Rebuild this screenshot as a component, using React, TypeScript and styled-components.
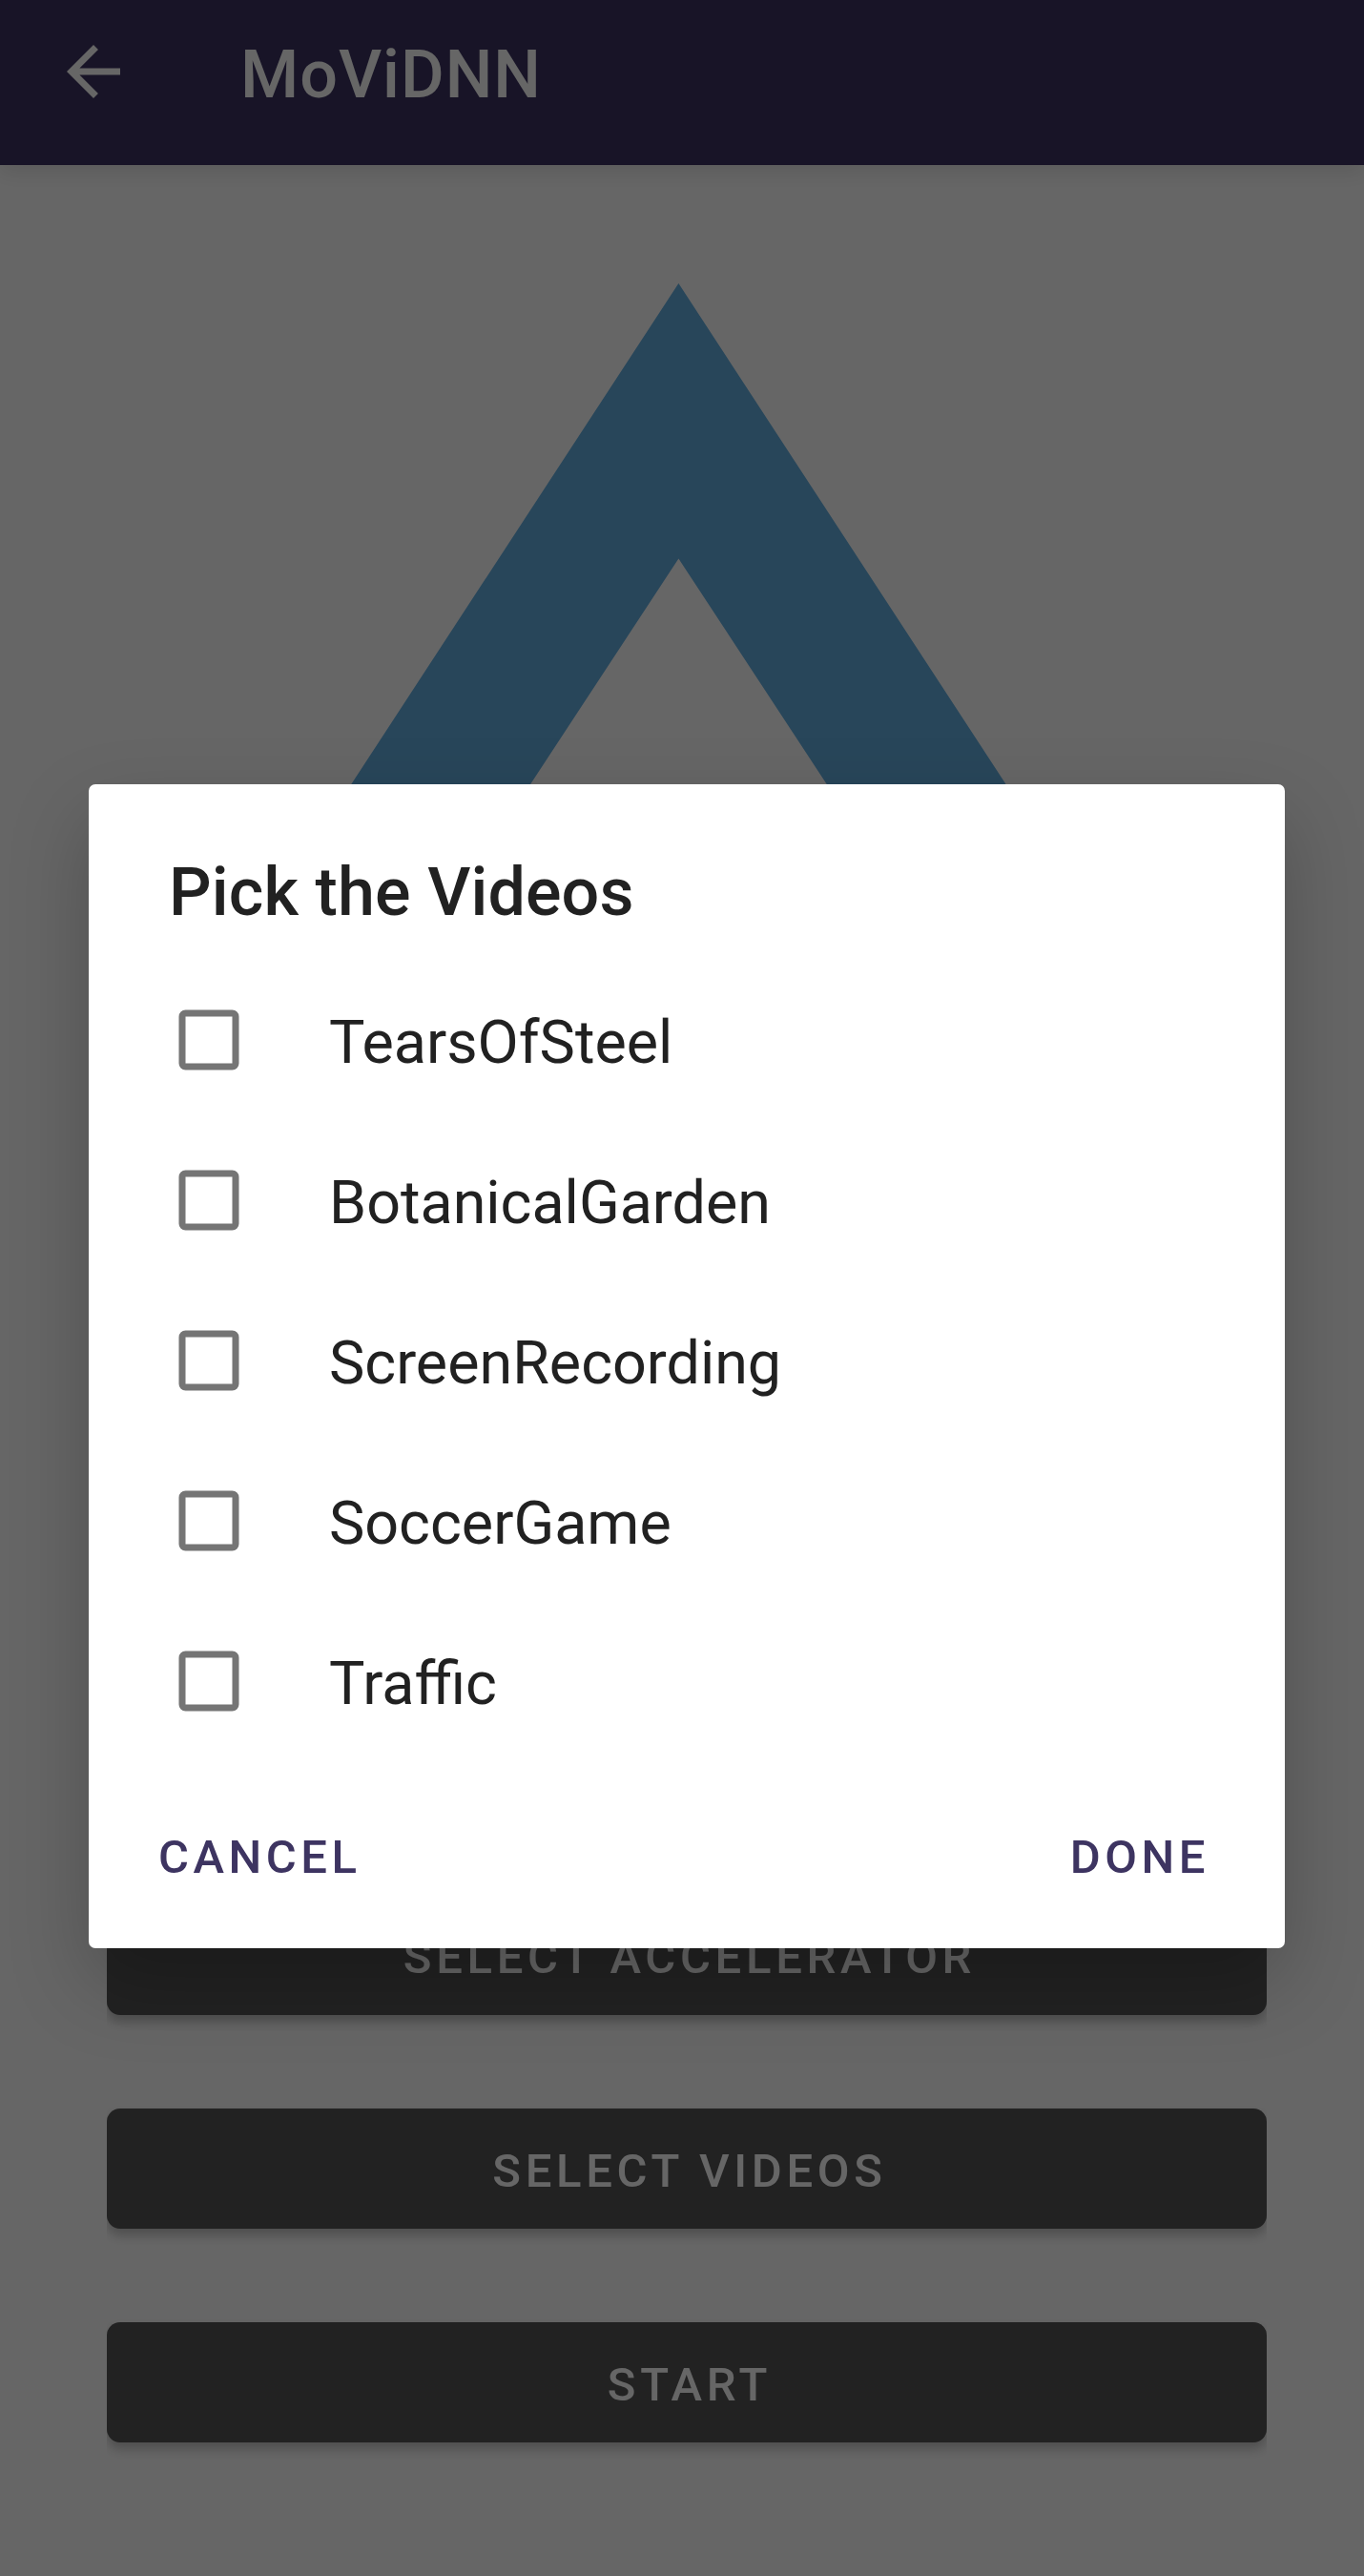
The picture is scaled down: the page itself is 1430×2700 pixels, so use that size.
import React from "react";
import styled, { createGlobalStyle } from "styled-components";

const PRIMARY = "#3d3461";

const GlobalStyle = createGlobalStyle`
  * { box-sizing: border-box; }
  body {
    margin: 0;
    background: #666;
    font-family: Roboto, "Liberation Sans", sans-serif;
  }
`;

const Screen = styled.div`
  position: relative;
  width: 1430px;
  height: 2700px;
  overflow: hidden;
  display: flex;
  flex-direction: column;
  background: #fff;
`;

const AppBar = styled.header`
  position: relative;
  z-index: 1;
  flex: none;
  display: flex;
  align-items: center;
  height: 173px;
  padding: 0 56px 23px;
  background: ${PRIMARY};
  color: #fff;
  box-shadow: 0 8px 20px rgba(0, 0, 0, 0.1);
`;

const BackIcon = styled.svg`
  width: 84px;
  height: 84px;
  fill: currentColor;
`;

const AppTitle = styled.h1`
  margin: 0 0 0 112px;
  padding-top: 6px;
  font-size: 70px;
  font-weight: 500;
  line-height: 82px;
  letter-spacing: 1px;
`;

const Content = styled.main`
  flex: 1;
  display: flex;
  flex-direction: column;
  justify-content: space-between;
  padding: 123px 102px 140px 112px;
`;

const Logo = styled.svg`
  display: block;
  align-self: flex-start;
  width: 1200px;
  height: 700px;
  fill: #64afe1;
`;

const ButtonColumn = styled.div`
  display: flex;
  flex-direction: column;
  gap: 98px;
`;

const ButtonFrame = styled.div`
  clip-path: inset(-20px 0 -60px 0);
`;

const RaisedButton = styled.button`
  display: block;
  width: 100%;
  height: 126px;
  padding: 6px 0 0 6px;
  border: 0;
  border-radius: 14px;
  background: #555;
  color: #fff;
  font: 500 49px/58px Roboto, "Liberation Sans", sans-serif;
  letter-spacing: 4.7px;
  text-transform: uppercase;
  box-shadow: 0 7px 12px rgba(0, 0, 0, 0.24);
`;

const Scrim = styled.div`
  position: absolute;
  inset: 0;
  z-index: 2;
  display: flex;
  align-items: flex-start;
  padding: 822px 83px 0 93px;
  background: rgba(0, 0, 0, 0.6);
`;

const Dialog = styled.section`
  flex: 1;
  display: flex;
  flex-direction: column;
  height: 1220px;
  padding-top: 72px;
  border-radius: 7px;
  background: #fff;
  box-shadow: 0 36px 84px rgba(0, 0, 0, 0.22);
`;

const DialogTitle = styled.h2`
  margin: 0 84px 30px;
  color: #212121;
  font-size: 70px;
  font-weight: 500;
  line-height: 82px;
  letter-spacing: 0.12px;
`;

const OptionList = styled.ul`
  margin: 0;
  padding: 0;
  list-style: none;
`;

const Option = styled.li`
  display: flex;
  align-items: center;
  height: 168px;
  padding: 0 94px;
`;

const Checkbox = styled.svg`
  flex: none;
  width: 64px;
  height: 64px;
  fill: none;
  stroke: #757575;
  stroke-width: 7;
`;

const OptionLabel = styled.span`
  margin-left: 94px;
  padding-top: 5px;
  color: #212121;
  font-size: 62.8px;
  line-height: 74px;
`;

const Actions = styled.div`
  flex: 1;
  display: flex;
  align-items: center;
  justify-content: space-between;
  padding: 6px 79px 0 73px;
`;

const TextButton = styled.button`
  padding: 0;
  border: 0;
  background: none;
  color: ${PRIMARY};
  font: 500 49px/58px Roboto, "Liberation Sans", sans-serif;
  letter-spacing: 4.5px;
  text-transform: uppercase;
`;

const videos = ["TearsOfSteel", "BotanicalGarden", "ScreenRecording", "SoccerGame", "Traffic"];
const actions = ["Select Accelerator", "Select Videos", "Start"];

export default function App() {
  return (
    <>
      <GlobalStyle />
      <Screen>
        <AppBar>
          <BackIcon viewBox="0 0 24 24">
            <path d="M20 11H7.83l5.59-5.59L12 4l-8 8 8 8 1.41-1.41L7.83 13H20v-2z" />
          </BackIcon>
          <AppTitle>MoViDNN</AppTitle>
        </AppBar>
        <Content>
          <Logo viewBox="0 0 1200 700">
            <path d="M599.4 1 L1004 620 H816.5 L599.4 289.5 L382.3 620 H194.8 Z" />
          </Logo>
          <ButtonColumn>
            {actions.map((label) => (
              <ButtonFrame key={label}>
                <RaisedButton>{label}</RaisedButton>
              </ButtonFrame>
            ))}
          </ButtonColumn>
        </Content>
        <Scrim>
          <Dialog role="dialog">
            <DialogTitle>Pick the Videos</DialogTitle>
            <OptionList>
              {videos.map((name) => (
                <Option key={name}>
                  <Checkbox viewBox="0 0 64 64">
                    <rect x="4" y="4" width="56" height="56" rx="3.5" />
                  </Checkbox>
                  <OptionLabel>{name}</OptionLabel>
                </Option>
              ))}
            </OptionList>
            <Actions>
              <TextButton>Cancel</TextButton>
              <TextButton>Done</TextButton>
            </Actions>
          </Dialog>
        </Scrim>
      </Screen>
    </>
  );
}
